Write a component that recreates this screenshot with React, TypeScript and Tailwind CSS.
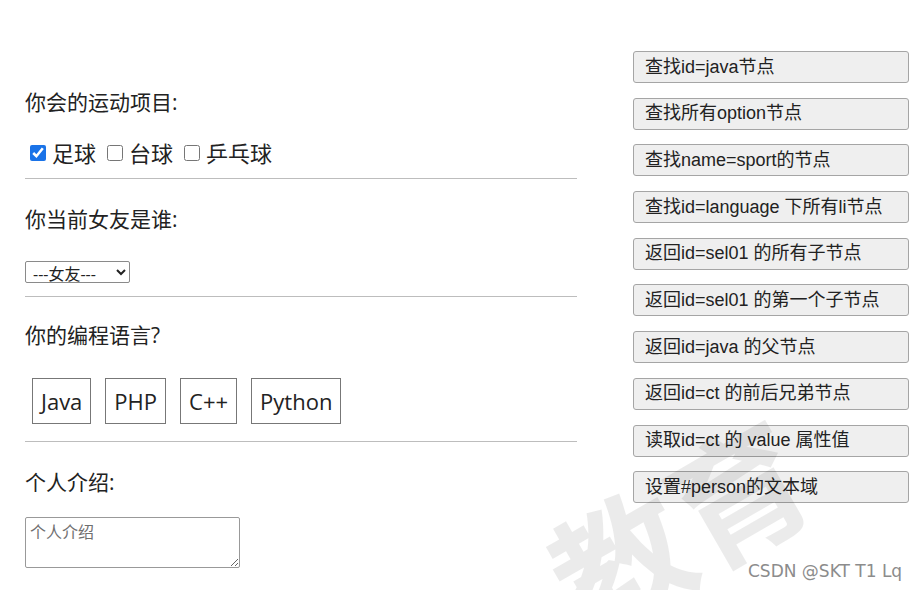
import React from 'react';

const cjk = { fontFamily: '"Open Sans", "Noto Sans CJK SC", sans-serif' };
const btnFont = { fontFamily: '"Liberation Sans", "Noto Sans CJK SC", sans-serif' };

const actions = [
  '查找id=java节点',
  '查找所有option节点',
  '查找name=sport的节点',
  '查找id=language 下所有li节点',
  '返回id=sel01 的所有子节点',
  '返回id=sel01 的第一个子节点',
  '返回id=java 的父节点',
  '返回id=ct 的前后兄弟节点',
  '读取id=ct 的 value 属性值',
  '设置#person的文本域',
];

const sports = [
  { label: '足球', checked: true },
  { label: '台球', checked: false },
  { label: '乒乓球', checked: false },
];

const langs = ['Java', 'PHP', 'C++', 'Python'];

export default function App() {
  return (
    <div className="relative h-[590px] w-[922px] overflow-hidden bg-white text-[#222]" style={cjk}>
      <div className="flex">
        {/* 左侧表单 */}
        <div className="ml-[25px] flex w-[552px] flex-col">
          <h3 className="mt-[88px] h-[28px] text-[21px] leading-[28px]">你会的运动项目:</h3>
          <div className="mt-[23px] flex h-[28px] items-center pl-[5px] text-[22px]">
            {sports.map((s) => (
              <label key={s.label} className="mr-[11px] flex items-center gap-[6px]">
                <input type="checkbox" defaultChecked={s.checked} className="h-4 w-4 accent-[#1a73e8]" />
                <span>{s.label}</span>
              </label>
            ))}
          </div>
          <hr className="mt-[11px] border-t border-[#bdbdbd]" />

          <h3 className="mt-[26px] h-[28px] text-[21px] leading-[28px]">你当前女友是谁:</h3>
          <div className="mt-[28px] flex h-[22px]">
            <select className="h-[22px] w-[105px] rounded-[2px] border border-[#8a8a8a] bg-white pl-[3px] text-[16px] leading-none">
              <option>---女友---</option>
            </select>
          </div>
          <hr className="mt-[13px] border-t border-[#bdbdbd]" />

          <h3 className="mt-[24px] h-[28px] text-[21px] leading-[28px]">你的编程语言?</h3>
          <ul className="mt-[29px] flex gap-[14px] pl-[7px]">
            {langs.map((l) => (
              <li
                key={l}
                className="flex h-[46px] items-center border border-[#777] px-[8px] text-[22px]"
              >
                {l}
              </li>
            ))}
          </ul>
          <hr className="mt-[17px] border-t border-[#bdbdbd]" />

          <h3 className="mt-[26px] h-[28px] text-[21px] leading-[28px]">个人介绍:</h3>
          <textarea
            placeholder="个人介绍"
            className="mt-[21px] h-[51px] w-[215px] rounded-[2px] border border-[#999] px-[4px] py-[2px] text-[16px] placeholder:text-[#6f6f6f]"
          />
        </div>

        {/* 右侧按钮 */}
        <div className="ml-[56px] mt-[51px] flex w-[276px] flex-col gap-[14.7px]" style={btnFont}>
          {actions.map((a) => (
            <button
              key={a}
              className="h-[32px] rounded-[3px] border border-[#a5a5a5] bg-[#efefef] px-[11px] text-left text-[18px] text-[#222]"
            >
              {a}
            </button>
          ))}
        </div>
      </div>

      {/* 水印 */}
      <div
        className="pointer-events-none absolute left-[540px] top-[458px] h-[140px] w-[280px] -rotate-[30deg] text-center text-[135px] font-bold leading-[140px] text-black/[0.08]"
        style={cjk}
      >
        教育
      </div>
      <div
        className="absolute left-[748px] top-[559px] text-[17px] text-[#8c8c8c]"
        style={{ fontFamily: '"DejaVu Sans", sans-serif' }}
      >
        CSDN @SKT T1 Lq
      </div>
    </div>
  );
}
